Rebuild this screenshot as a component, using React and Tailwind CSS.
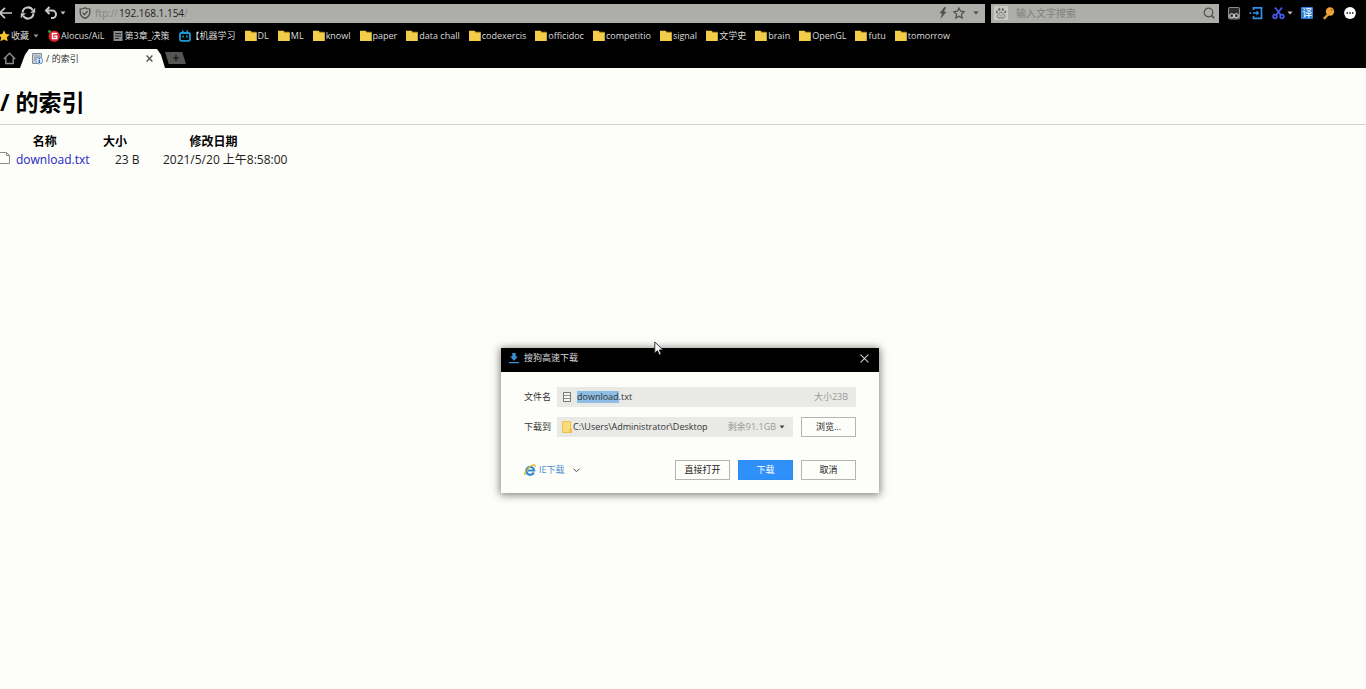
import React, { useEffect, useRef } from "react";

const folders = [
  "DL",
  "ML",
  "knowl",
  "paper",
  "data chall",
  "codexercis",
  "officidoc",
  "competitio",
  "signal",
  "文学史",
  "brain",
  "OpenGL",
  "futu",
  "tomorrow",
];

function Caret({ className }) {
  return (
    <svg viewBox="0 0 6 4" className={`h-1 w-1.5 shrink-0 ${className || ""}`}>
      <path d="M0.5 0.5h5L3 3.5z" fill="currentColor" />
    </svg>
  );
}

function FolderIcon() {
  return (
    <svg viewBox="0 0 12 12" className="h-3 w-3 shrink-0">
      <path d="M0 .8h5.500l1 1.400h5.300V11H0z" fill="#f3cd4a" />
      <path d="M6 .9l.8 1.200h5" fill="none" stroke="#a98220" strokeWidth=".6" />
    </svg>
  );
}

function Star() {
  return (
    <svg viewBox="0 0 12 12" className="-ml-0.5 h-3 w-3 shrink-0">
      <path
        d="M6 .3l1.800 3.600 4 .6-2.900 2.800.8 4L6 9.500l-3.600 1.800.8-4L.3 4.500l4-.6z"
        fill="#f7c52d"
      />
    </svg>
  );
}

function Toolbar() {
  return (
    <div className="flex h-[26px] items-center pr-2.5 text-[#c9c9c9]">
      <div className="flex w-[75px] shrink-0 items-center">
        <button aria-label="后退">
          <svg viewBox="0 0 12 14" className="h-3.5 w-3" fill="none" stroke="currentColor" strokeWidth="1.7">
            <path d="M12 7H0M5 1.800L-.2 7 5 12.200" />
          </svg>
        </button>
        <button aria-label="刷新" className="ml-2">
          <svg viewBox="0 0 16 14" className="h-3.5 w-4" fill="none" stroke="currentColor" strokeWidth="2">
            <path d="M2.600 6.600A5.400 5.400 0 0 1 12.600 4M13.400 7.400A5.400 5.400 0 0 1 3.400 10" />
            <path d="M15.200 1.800v5h-5zM.8 12.200v-5h5z" fill="currentColor" stroke="none" />
          </svg>
        </button>
        <button aria-label="撤销" className="ml-2 flex items-center gap-0.5">
          <svg viewBox="0 0 14 14" className="h-3.5 w-3.5" fill="none" stroke="currentColor" strokeWidth="2">
            <path d="M2 4.500h6.200a3.800 3.800 0 0 1 0 7.600H7" />
            <path d="M5.500 1L2 4.500 5.500 8" />
          </svg>
          <Caret />
        </button>
      </div>

      <div className="flex h-[19px] min-w-0 flex-1 items-center bg-[#adada9] pr-1.5 pl-1 text-[10px] leading-4 text-[#484848]">
        <svg viewBox="0 0 12 12" className="h-3 w-3 shrink-0" fill="none" stroke="#444" strokeWidth="1.2">
          <path d="M6 .7c1.500 1 3 1.300 4.800 1.300v3.800c0 2.600-2 4.400-4.800 5.600-2.800-1.200-4.800-3-4.800-5.600V2C3 2 4.500 1.700 6 .7z" />
          <path d="M3.500 5.600l2 2 3.200-3.400" />
        </svg>
        <span className="ml-1 text-[#858582]">ftp://</span>
        <input
          aria-label="地址"
          defaultValue="192.168.1.154"
          className="ml-px field-sizing-content text-[#222] outline-none"
        />
        <span className="text-[#858582]">/</span>
        <button aria-label="极速模式" className="ml-auto">
          <svg viewBox="0 0 8 12" className="h-3 w-2">
            <path d="M5.500 0L.5 6.300l2.600.2L1.300 12 7.500 4.800l-2.800-.2L7.300.6z" fill="#505050" />
          </svg>
        </button>
        <button aria-label="收藏此页" className="ml-1.5">
          <svg viewBox="0 0 12 12" className="h-3 w-3" fill="none" stroke="#505050" strokeWidth="1.2">
            <path d="M6 .9l1.500 3.300 3.700.5-2.700 2.600.7 3.700L6 9.200 2.800 11l.7-3.700L.8 4.700l3.700-.5z" />
          </svg>
        </button>
        <button aria-label="更多地址" className="ml-2">
          <Caret />
        </button>
      </div>

      <div className="ml-1.5 flex h-[19px] w-[228px] shrink-0 items-center bg-[#adada9] pr-1 pl-[3px]">
        <button aria-label="百度" className="flex h-3.5 w-3.5 items-center justify-center bg-[#c9c9c5]">
          <svg viewBox="0 0 12 12" className="h-3 w-3" fill="#6e6e6b">
            <ellipse cx="4.300" cy="2.400" rx="1.100" ry="1.600" />
            <ellipse cx="7.700" cy="2.400" rx="1.100" ry="1.600" />
            <ellipse cx="1.800" cy="5" rx="1" ry="1.400" />
            <ellipse cx="10.200" cy="5" rx="1" ry="1.400" />
            <path
              d="M6 5.200c1.700 0 2 1.500 3.200 2.500 1.400 1.200.7 3.300-1 3.300H3.800c-1.700 0-2.400-2.100-1-3.300C4 6.700 4.300 5.200 6 5.200z"
              fill="none"
              stroke="#6e6e6b"
            />
            <path d="M5 7.500v2M7 7.500v2" stroke="#6e6e6b" strokeWidth=".8" />
          </svg>
        </button>
        <input
          aria-label="搜索"
          placeholder="输入文字搜索"
          className="ml-2 min-w-0 flex-1 text-[10px] leading-4 outline-none placeholder:text-[#80807d]"
        />
        <button aria-label="开始搜索">
          <svg viewBox="0 0 12 12" className="h-3 w-3" fill="none" stroke="#505050" strokeWidth="1.2">
            <circle cx="5.500" cy="5.500" r="4.300" />
            <path d="M8.600 8.600l2.700 2.700" strokeWidth="1.5" />
          </svg>
        </button>
      </div>

      <div className="ml-2 flex w-[129px] shrink-0 items-center justify-between">
        <button aria-label="扩展">
          <svg viewBox="0 0 14 14" className="h-3.5 w-3.5" fill="none" stroke="#b9b9b9" strokeWidth="1.1">
            <rect x="1.500" y="1.500" width="11" height="11.500" rx="1.500" fill="#2b2b2b" stroke="#8c8c8c" />
            <circle cx="4.700" cy="9.700" r="2" stroke="#d0d0d0" />
            <circle cx="9.300" cy="9.700" r="2" stroke="#d0d0d0" />
          </svg>
        </button>
        <button aria-label="登录">
          <svg viewBox="0 0 14 14" className="h-3.5 w-3.5" fill="none" stroke="#2f93e8" strokeWidth="1.7">
            <path d="M4.500 4V1.800h8v10.600h-8V10M4 7h5" />
            <path d="M7.500 4.300L10.200 7 7.500 9.700z" fill="#2f93e8" stroke="none" />
            <path d="M.5 7h1.800" />
          </svg>
        </button>
        <button aria-label="截图" className="flex items-center gap-0.5">
          <svg viewBox="0 0 13 14" className="h-3.5 w-[13px]" fill="none" stroke="#4457ee" strokeWidth="1.8">
            <path d="M3 1.500l6 7.800M10 1.500L4 9.300" />
            <circle cx="3" cy="10.500" r="1.800" />
            <circle cx="10" cy="10.500" r="1.800" />
          </svg>
          <Caret />
        </button>
        <button aria-label="翻译" className="h-3 w-3 rounded-[1px] bg-[#2f80d6] text-[10px] leading-3 text-white">
          译
        </button>
        <button aria-label="密码">
          <svg viewBox="0 0 14 14" className="h-3.5 w-3.5">
            <path d="M7 7.500L1.800 12.800" stroke="#e39a35" strokeWidth="2.4" />
            <circle cx="8" cy="5.500" r="4.200" fill="#eea33b" />
            <circle cx="9.600" cy="4" r="1" fill="#a86d22" />
          </svg>
        </button>
        <button aria-label="更多">
          <svg viewBox="0 0 12 12" className="h-3 w-3">
            <circle cx="6" cy="6" r="5.900" fill="#fff" />
            <path d="M2.500 5.300H4v1.400H2.500zM5.300 5.300h1.500v1.400H5.300zM8 5.300h1.500v1.400H8z" fill="#111" />
          </svg>
        </button>
      </div>
    </div>
  );
}

function Bookmarks() {
  return (
    <nav className="flex h-[21px] items-center gap-[9px] overflow-hidden pb-px text-[9px] leading-3 whitespace-nowrap text-[#dcdcdc]">
      <button className="flex items-center">
        <Star />
        <span className="ml-px">收藏</span>
        <Caret className="ml-1 text-[#999]" />
      </button>
      <a href="#alocus" className="flex items-center gap-px">
        <svg viewBox="0 0 12 12" className="h-3 w-3 shrink-0">
          <circle cx="6.200" cy="6.200" r="5.700" fill="#d9202b" />
          <path d="M9.200 3.600H4.500v5h4.200V6.200H6.300" fill="none" stroke="#fff" strokeWidth="1.5" />
          <circle cx="1.500" cy="1.500" r="1.400" fill="#25a53c" />
        </svg>
        Alocus/AiL
      </a>
      <a href="#chapter3" className="flex items-center gap-px">
        <svg viewBox="0 0 10 12" className="h-3 w-2.5 shrink-0">
          <path d="M.5 1h9v10h-9z" fill="#8a8a8a" />
          <path d="M2 3.500h6M2 6h6M2 8.500h4" stroke="#222" />
        </svg>
        第3章_决策
      </a>
      <a href="#ml-course" className="flex items-center">
        <svg viewBox="0 0 12 12" className="h-3 w-3 shrink-0" fill="none" stroke="#1b9bd1" strokeWidth="1.8">
          <path d="M3 .3L4.800 2.500M9 .3L7.200 2.500" strokeWidth="1.2" />
          <rect x="1" y="3" width="10" height="7.800" rx="1.300" />
          <path d="M4.200 5.500v2M7.800 5.500v2" strokeWidth="1.5" />
        </svg>
        【机器学习
      </a>
      {folders.map((name) => (
        <a key={name} href={`#${name}`} className="flex items-center gap-px">
          <FolderIcon />
          {name}
        </a>
      ))}
    </nav>
  );
}

function TabBar() {
  return (
    <div className="flex h-[21px] items-end">
      <button aria-label="主页" className="mb-[3px] ml-[3px]">
        <svg viewBox="0 0 13 13" className="h-[13px] w-[13px]" fill="none" stroke="#8d8d8d" strokeWidth="1.4">
          <path d="M.8 7L6.500 1.200 12.200 7M2.800 5.800v5.700h7.400V5.800" />
        </svg>
      </button>
      <div className="ml-1 flex h-[19px] w-[145px] items-center bg-[#fdfef9] px-3 text-[9px] leading-3 text-[#333] [clip-path:polygon(0_100%,5px_30%,9px_0,137px_0,141px_30%,100%_100%)]">
        <svg viewBox="0 0 11 12" className="h-3 w-[11px] shrink-0">
          <path d="M.6.6h8.800v9.800H.6z" fill="#d2d8dc" stroke="#788087" />
          <path d="M2 3h6M2 5h5M2 7h4" stroke="#8a9298" />
          <circle cx="7.300" cy="7.500" r="3.500" fill="#d5e6fb" stroke="#5f8ac4" strokeWidth=".8" />
          <path d="M7.300 7v3M7.300 5v1.200" stroke="#2860ad" strokeWidth="1.3" />
        </svg>
        <span className="ml-[3px]">/ 的索引</span>
        <button aria-label="关闭标签" className="ml-auto">
          <svg viewBox="0 0 7 7" className="h-[7px] w-[7px]" stroke="#555" strokeWidth="1.4">
            <path d="M.6.6l5.800 5.800M6.400.6L.6 6.400" />
          </svg>
        </button>
      </div>
      <button
        aria-label="新建标签"
        className="mb-1 flex h-3 w-[21px] items-center justify-center bg-[#555553] [clip-path:polygon(0_0,82%_0,100%_100%,18%_100%)]"
      >
        <svg viewBox="0 0 6 6" className="h-1.5 w-1.5" stroke="#111" strokeWidth="1.2">
          <path d="M3 0v6M0 3h6" />
        </svg>
      </button>
    </div>
  );
}

function Listing() {
  return (
    <main className="text-[12px] leading-[18px] text-[#222]">
      <h1 className="mt-4 text-[23px] leading-9 font-bold text-black">/ 的索引</h1>
      <hr className="mt-1 border-[#cfcfcc]" />
      <table className="mt-2">
        <thead>
          <tr className="font-bold text-black">
            <th className="w-[88px]">名称</th>
            <th className="w-[50px] pl-px">大小</th>
            <th className="w-[148px]">修改日期</th>
          </tr>
        </thead>
        <tbody>
          <tr>
            <td>
              <a href="#download.txt" className="flex items-center gap-1.5 text-[#1d1dc4]">
                <svg viewBox="0 0 10 12" className="mb-1 h-3 w-2.5">
                  <path d="M-1 .5h7.500l3 3v8H-1z" fill="#fff" stroke="#8c8c8c" />
                  <path d="M6.500.5v3h3" fill="none" stroke="#8c8c8c" />
                </svg>
                download.txt
              </a>
            </td>
            <td className="text-right">23 B</td>
            <td className="text-right whitespace-nowrap">2021/5/20 上午8:58:00</td>
          </tr>
        </tbody>
      </table>
    </main>
  );
}

function DownloadDialog() {
  const nameRef = useRef(null);

  // select the base name only, the extension stays as it is
  useEffect(() => {
    nameRef.current.focus();
    nameRef.current.setSelectionRange(0, "download".length);
  }, []);

  const button =
    "h-5 w-[55px] border border-[#b5b5b2] bg-[#fdfef9] text-center text-[#222]";

  return (
    <div
      role="dialog"
      aria-label="搜狗高速下载"
      className="absolute top-[348px] left-[501px] w-[378px] bg-[#fdfef9] text-[9px] leading-3 text-[#333] shadow-[0_1px_8px_1px_rgba(0,0,0,0.5)]"
    >
      <div className="flex h-6 items-center bg-black pr-2.5 pb-1 pl-2 text-[#d8d8d8]">
        <svg viewBox="0 0 10 12" className="h-3 w-2.5" fill="#3d8fd6">
          <path d="M3.300 1h3.400v3.500H9L5 8.800 1 4.500h2.300zM0 10h10v1.200H0z" />
        </svg>
        <span className="ml-[5px]">搜狗高速下载</span>
        <button aria-label="关闭" className="ml-auto">
          <svg viewBox="0 0 9 9" className="h-[9px] w-[9px]" stroke="#ccc" strokeWidth="1.1">
            <path d="M.6.6l7.800 7.800M8.400.6L.6 8.400" />
          </svg>
        </button>
      </div>
      <div className="px-[23px] pt-[15px] pb-[13px]">
        <div className="flex items-center">
          <label htmlFor="filename" className="w-[33px]">
            文件名
          </label>
          <div className="flex h-5 flex-1 items-center bg-[#e9e9e6] pr-2 pl-1.5">
            <svg viewBox="0 0 8 10" className="h-2.5 w-2" fill="none" stroke="#777">
              <path d="M.5.5h7v9h-7z" fill="#f4f4f2" />
              <path d="M1 3.500h6M1 6.500h6" strokeWidth=".8" />
            </svg>
            <input
              id="filename"
              ref={nameRef}
              defaultValue="download.txt"
              className="ml-1.5 min-w-0 flex-1 outline-none selection:bg-[#8dbde4] selection:text-[#333]"
            />
            <span className="text-[#9a9a98]">大小23B</span>
          </div>
        </div>
        <div className="mt-2.5 flex items-center">
          <label htmlFor="target" className="w-[33px]">
            下载到
          </label>
          <div className="flex h-5 flex-1 items-center bg-[#e9e9e6] pr-2 pl-[5px]">
            <svg viewBox="0 0 10 12" className="h-3 w-2.5">
              <path d="M.5.5h8v11h-8z" fill="#fbdc78" stroke="#ecc04d" />
              <path d="M8 7.500h2V12H6.500z" fill="#eebf45" />
            </svg>
            <select id="target" className="ml-px min-w-0 flex-1 appearance-none outline-none">
              <option>C:\Users\Administrator\Desktop</option>
            </select>
            <span className="text-[#9a9a98]">剩余91.1GB</span>
            <Caret className="ml-[3px] text-[#444]" />
          </div>
          <button className={`${button} ml-2`}>浏览...</button>
        </div>
        <div className="mt-[23px] flex items-center gap-2">
          <button className="mr-auto flex items-center text-[#4a90cf]">
            <svg viewBox="0 0 12 12" className="h-3 w-3" fill="none">
              <path d="M9.800 8.600A4 4 0 1 1 10.200 6.500H3.500" stroke="#2f8ad0" strokeWidth="2.2" />
              <path d="M1.500 11.300C-.8 9.800 3 3.800 7.800 1.500c2.300-1 4-.6 3.200 1.500" stroke="#e6b422" strokeWidth="1.2" />
            </svg>
            <span className="ml-[3px]">IE下载</span>
            <svg viewBox="0 0 7 5" className="ml-2 h-[5px] w-[7px]" fill="none" stroke="#444">
              <path d="M.6.8l2.900 2.900L6.400.8" />
            </svg>
          </button>
          <button className={button}>直接打开</button>
          <button className="h-5 w-[55px] border border-[#2d8cf0] bg-[#2f90fa] text-center text-white">
            下载
          </button>
          <button className={button}>取消</button>
        </div>
      </div>
    </div>
  );
}

function App() {
  return (
    <div className="relative min-h-screen overflow-hidden bg-[#fdfef9] font-['Open_Sans','Noto_Sans_CJK_SC',sans-serif]">
      <header className="bg-black">
        <Toolbar />
        <Bookmarks />
        <TabBar />
      </header>
      <Listing />
      <DownloadDialog />
      <svg viewBox="0 0 10 15" className="pointer-events-none absolute top-[341px] left-[654px] h-[15px] w-2.5">
        <path d="M.8 1v11l2.600-2.400 1.900 4.200 1.800-.8L5.200 8.900h3.600z" fill="#fff" stroke="#222" strokeWidth=".9" />
      </svg>
    </div>
  );
}

export default App;
